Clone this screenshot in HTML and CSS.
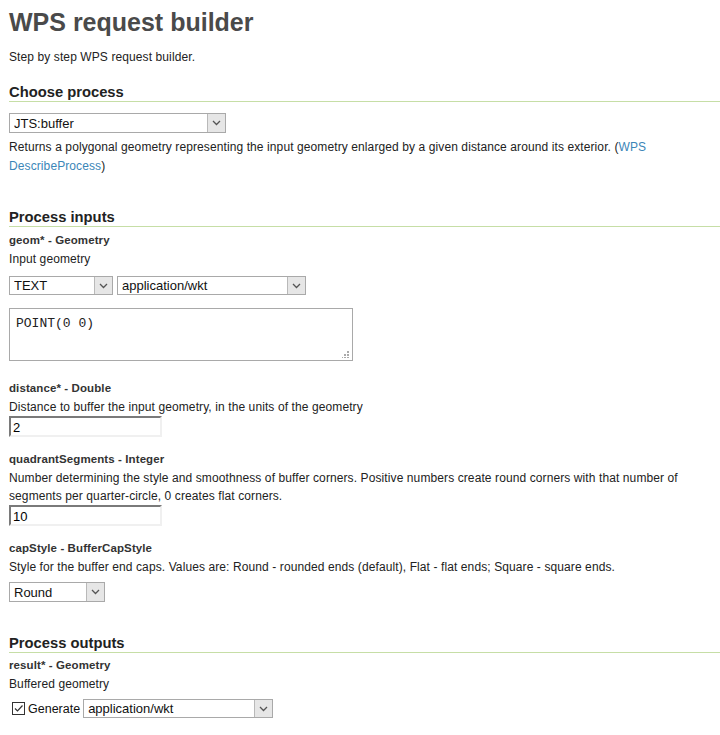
FILE: index.html
```html
<!DOCTYPE html>
<html>
<head>
<meta charset="utf-8">
<link rel="stylesheet" href="styles.css">
</head>
<body>
<div class="page">
  <h1 class="title">WPS request builder</h1>
  <p class="intro">Step by step WPS request builder.</p>

  <h2 class="section">Choose process</h2>
  <div class="process-select">
    <span class="sel w-process"><select><option>JTS:buffer</option></select><span class="arrow"><svg width="9" height="6" viewBox="0 0 9 6"><path d="M1 1l3.5 3.5L8 1" fill="none" stroke="#555" stroke-width="1.3"/></svg></span></span>
  </div>
  <p class="process-desc">Returns a polygonal geometry representing the input geometry enlarged by a given distance around its exterior. (<a href="#">WPS DescribeProcess</a>)</p>

  <h2 class="section gap-big">Process inputs</h2>

  <div class="field">
    <div class="label">geom* - Geometry</div>
    <div class="desc">Input geometry</div>
    <div class="row">
      <span class="sel w-type"><select><option>TEXT</option></select><span class="arrow"><svg width="9" height="6" viewBox="0 0 9 6"><path d="M1 1l3.5 3.5L8 1" fill="none" stroke="#555" stroke-width="1.3"/></svg></span></span>
      <span class="sel w-mime"><select><option>application/wkt</option></select><span class="arrow"><svg width="9" height="6" viewBox="0 0 9 6"><path d="M1 1l3.5 3.5L8 1" fill="none" stroke="#555" stroke-width="1.3"/></svg></span></span>
    </div>
    <div class="ta-wrap">
      <textarea class="wkt">POINT(0 0)</textarea>
      <svg class="grip" width="7" height="7" viewBox="0 0 7 7"><g fill="#aaa"><rect x="5" y="0" width="2" height="2"/><rect x="2" y="3" width="2" height="2"/><rect x="5" y="3" width="2" height="2"/><rect x="-1" y="6" width="2" height="2"/><rect x="2" y="6" width="2" height="2"/><rect x="5" y="6" width="2" height="2"/></g></svg>
    </div>
  </div>

  <div class="field">
    <div class="label">distance* - Double</div>
    <div class="desc">Distance to buffer the input geometry, in the units of the geometry</div>
    <input class="txt" type="text" value="2">
  </div>

  <div class="field">
    <div class="label">quadrantSegments - Integer</div>
    <div class="desc">Number determining the style and smoothness of buffer corners. Positive numbers create round corners with that number of segments per quarter-circle, 0 creates flat corners.</div>
    <input class="txt" type="text" value="10">
  </div>

  <div class="field">
    <div class="label">capStyle - BufferCapStyle</div>
    <div class="desc">Style for the buffer end caps. Values are: Round - rounded ends (default), Flat - flat ends; Square - square ends.</div>
    <div class="row row-cap">
      <span class="sel w-cap"><select><option>Round</option></select><span class="arrow"><svg width="9" height="6" viewBox="0 0 9 6"><path d="M1 1l3.5 3.5L8 1" fill="none" stroke="#555" stroke-width="1.3"/></svg></span></span>
    </div>
  </div>

  <h2 class="section gap-out">Process outputs</h2>
  <div class="field out-field">
    <div class="label">result* - Geometry</div>
    <div class="desc">Buffered geometry</div>
    <div class="gen-row">
      <label class="gen">
        <svg class="cb" width="13" height="13" viewBox="0 0 13 13"><rect x="0.5" y="0.5" width="12" height="12" fill="#fff" stroke="#333"/><path d="M3 6.5l2.5 2.5L10.5 3.5" fill="none" stroke="#333" stroke-width="1.2"/></svg>
        <span>Generate</span>
      </label>
      <span class="sel w-out"><select><option>application/wkt</option></select><span class="arrow"><svg width="9" height="6" viewBox="0 0 9 6"><path d="M1 1l3.5 3.5L8 1" fill="none" stroke="#555" stroke-width="1.3"/></svg></span></span>
    </div>
  </div>
</div>
</body>
</html>
```
FILE: styles.css
```css
html, body {
  margin: 0;
  padding: 0;
  background: #fff;
}
body {
  font-family: "Liberation Sans", Arial, sans-serif;
  font-size: 12px;
  letter-spacing: 0.1px;
  color: #222;
}
.page {
  padding: 0 0 0 9px;
}
.title {
  margin: 8px 0 0;
  font-size: 25px;
  line-height: 28px;
  font-weight: bold;
  letter-spacing: 0;
  color: #4a4a4a;
}
.intro {
  margin: 12px 0 0;
  line-height: 19px;
}
.section {
  margin: 16px 0 0;
  font-size: 14.75px;
  line-height: 18px;
  font-weight: bold;
  letter-spacing: 0;
  color: #222;
  border-bottom: 1px solid #c6dea6;
}
.section.gap-big { margin-top: 32px; }
.section.gap-out { margin-top: 32px; }

.process-select {
  margin-top: 11px;
  display: flex;
}
.process-desc {
  margin: 5px 0 0;
  line-height: 19px;
  padding-right: 20px;
}
.process-desc a {
  color: #3b86b8;
  text-decoration: none;
}

.sel {
  position: relative;
  display: inline-block;
  height: 20px;
}
.sel select {
  appearance: none;
  -webkit-appearance: none;
  width: 100%;
  height: 100%;
  box-sizing: border-box;
  border: 1px solid #a9a9a9;
  border-radius: 0;
  background: #fff;
  font-family: "Liberation Sans", Arial, sans-serif;
  font-size: 13px;
  color: #111;
  padding: 0 0 0 4px;
  margin: 0;
  outline: none;
}
.sel .arrow {
  position: absolute;
  right: 1px;
  top: 1px;
  bottom: 1px;
  width: 17px;
  background: #e6e6e6;
  border-left: 1px solid #b9b9b9;
  display: flex;
  align-items: center;
  justify-content: center;
  pointer-events: none;
}
.w-process { width: 217px; }
.w-type { width: 104px; }
.w-mime { width: 189px; }
.w-cap { width: 96px; }
.w-out { width: 190px; }

.field {
  margin-top: 4px;
}
.field + .field { margin-top: 13px; }
.field.out-field { margin-top: 3px; }
.label {
  font-size: 11.5px;
  font-weight: bold;
  line-height: 19px;
  color: #333;
}
.desc {
  line-height: 18px;
  padding-right: 20px;
}
.row {
  display: flex;
  gap: 4px;
  margin-top: 8px;
}
.row .sel { height: 19px; }
.row-cap { margin-top: 6px; }
.row-cap .sel { height: 20px; }

.ta-wrap {
  position: relative;
  width: 344px;
  height: 53px;
  margin-top: 13px;
  margin-bottom: 18px;
}
.wkt {
  display: block;
  box-sizing: border-box;
  width: 344px;
  height: 53px;
  margin: 0;
  border: 1px solid #a9a9a9;
  padding: 7px 6px;
  font-family: "Liberation Mono", "Courier New", monospace;
  font-size: 13px;
  letter-spacing: 0;
  color: #222;
  resize: none;
  outline: none;
}
.grip {
  position: absolute;
  right: 4px;
  bottom: 3px;
}
.txt {
  display: block;
  box-sizing: border-box;
  width: 153px;
  height: 21px;
  margin: 0;
  padding: 1px 2px 0;
  border-style: solid;
  border-width: 2px;
  border-color: #7a7a7a #f0f0f0 #f0f0f0 #7a7a7a;
  font-family: "Liberation Sans", Arial, sans-serif;
  font-size: 13px;
  color: #000;
  outline: none;
}
.gen-row {
  display: flex;
  align-items: center;
  margin-top: 6px;
  gap: 3px;
}
.gen-row .sel { height: 19px; }
.gen {
  display: flex;
  align-items: center;
  gap: 3px;
  padding-left: 3px;
  font-size: 12.5px;
  letter-spacing: 0;
  color: #111;
}
```
